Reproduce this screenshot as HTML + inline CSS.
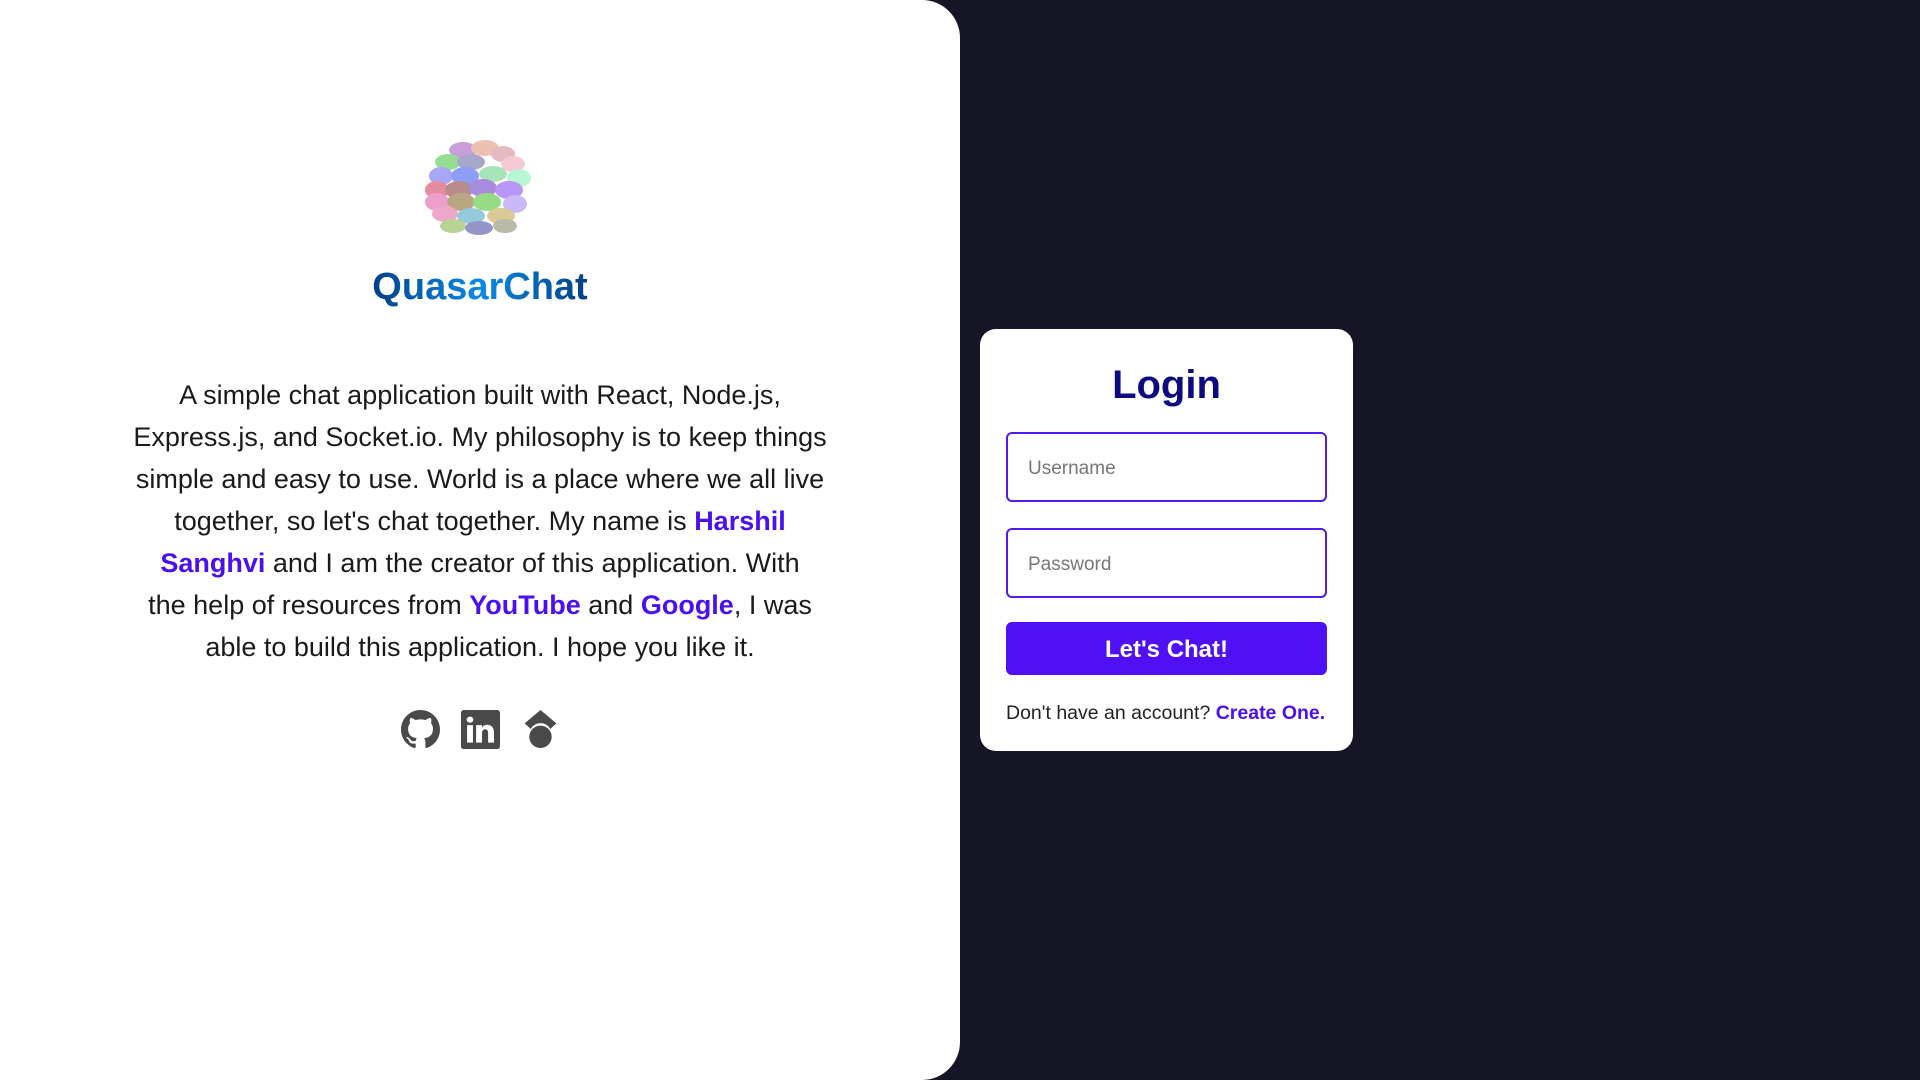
<!DOCTYPE html>
<html><head><meta charset="utf-8"><style>
*{margin:0;padding:0;box-sizing:border-box}
body{width:1920px;height:1080px;background:#151526;font-family:"Liberation Sans",sans-serif;position:relative;overflow:hidden}
.left{position:absolute;left:0;top:0;width:960px;height:1080px;background:#fff;border-radius:0 38px 38px 0}
.logo{position:absolute;left:423px;top:138px;width:114px;height:100px}
.title{position:absolute;left:0;width:960px;top:266px;text-align:center}
.title span{display:inline-block;font-size:38px;font-weight:bold;background:linear-gradient(90deg,#003f88,#0a8be8 50%,#003f88);-webkit-background-clip:text;background-clip:text;color:transparent}
.para{position:absolute;left:80px;width:800px;top:374px;text-align:center;font-size:27px;line-height:42px;color:#1a1a1a;white-space:nowrap}
.para b{color:#4a10f0}
.icons{position:absolute;top:710px;left:0;width:960px;display:flex;justify-content:center;gap:21px}
.icons svg{width:39px;height:39px}
.card{position:absolute;left:980px;top:329px;width:373px;height:422px;background:#fff;border-radius:16px}
.lt{position:absolute;left:0;width:373px;top:34px;text-align:center;font-size:40px;font-weight:bold;color:#0d0a80}
.inp{position:absolute;left:26px;width:321px;height:70px;border:2px solid #4f1af0;border-radius:6px;font-size:19px;color:#777;padding-left:20px;line-height:70px}
.btn{position:absolute;left:26px;top:293px;width:321px;height:53px;background:#5010f5;border-radius:6px;color:#fff;font-weight:bold;font-size:24px;text-align:center;line-height:56px}
.ft{position:absolute;left:26px;top:373px;font-size:19.5px;color:#222}
.ft b{color:#4a10f0}
</style></head><body>
<div class="left">
<svg class="logo" viewBox="0 0 114 100">
<g opacity="0.55">
<ellipse cx="40" cy="12" rx="14" ry="8" fill="#a050c0"/><ellipse cx="62" cy="10" rx="14" ry="8" fill="#e09070"/><ellipse cx="80" cy="16" rx="12" ry="8" fill="#d08090"/>
<ellipse cx="25" cy="24" rx="13" ry="8" fill="#40c040"/><ellipse cx="48" cy="24" rx="14" ry="8" fill="#6060a0"/><ellipse cx="90" cy="26" rx="12" ry="8" fill="#f0a0b0"/>
<ellipse cx="18" cy="38" rx="12" ry="9" fill="#6060f0"/><ellipse cx="42" cy="38" rx="14" ry="9" fill="#3050f0"/><ellipse cx="70" cy="36" rx="14" ry="8" fill="#60d080"/><ellipse cx="96" cy="40" rx="12" ry="9" fill="#80f0b0"/>
<ellipse cx="14" cy="52" rx="12" ry="9" fill="#d03050"/><ellipse cx="36" cy="52" rx="14" ry="9" fill="#803030"/><ellipse cx="60" cy="50" rx="14" ry="9" fill="#6030c0"/><ellipse cx="86" cy="52" rx="14" ry="9" fill="#8040f0"/>
<ellipse cx="14" cy="64" rx="12" ry="9" fill="#e050a0"/><ellipse cx="38" cy="64" rx="14" ry="9" fill="#806020"/><ellipse cx="64" cy="64" rx="14" ry="9" fill="#40c020"/><ellipse cx="92" cy="66" rx="12" ry="9" fill="#a080f0"/>
<ellipse cx="22" cy="76" rx="13" ry="8" fill="#e060a0"/><ellipse cx="48" cy="78" rx="14" ry="8" fill="#40a0c0"/><ellipse cx="78" cy="78" rx="14" ry="8" fill="#c0a040"/>
<ellipse cx="30" cy="88" rx="13" ry="7" fill="#80b040"/><ellipse cx="56" cy="90" rx="14" ry="7" fill="#4040a0"/><ellipse cx="82" cy="88" rx="12" ry="7" fill="#808060"/>
</g></svg>
<div class="title"><span>QuasarChat</span></div>
<div class="para">A simple chat application built with React, Node.js,<br>Express.js, and Socket.io. My philosophy is to keep things<br>simple and easy to use. World is a place where we all live<br>together, so let's chat together. My name is <b>Harshil</b><br><b>Sanghvi</b> and I am the creator of this application. With<br>the help of resources from <b>YouTube</b> and <b>Google</b>, I was<br>able to build this application. I hope you like it.</div>
<div class="icons">
<svg viewBox="0 0 16 16"><path fill="#4a4a4a" d="M8 0C3.58 0 0 3.58 0 8c0 3.54 2.29 6.53 5.47 7.59.4.07.55-.17.55-.38 0-.19-.01-.82-.01-1.49-2.01.37-2.53-.49-2.690-.94-.09-.23-.48-.94-.82-1.130-.28-.15-.68-.52-.01-.53.63-.01 1.08.58 1.23.82.72 1.21 1.87.87 2.33.66.07-.52.28-.87.51-1.07-1.78-.2-3.64-.89-3.64-3.95 0-.87.31-1.59.82-2.15-.08-.2-.36-1.02.08-2.12 0 0 .67-.21 2.2.82.64-.18 1.32-.27 2-.27.68 0 1.36.09 2 .27 1.53-1.04 2.2-.82 2.2-.82.44 1.1.16 1.92.08 2.12.51.56.82 1.27.82 2.15 0 3.07-1.87 3.75-3.65 3.95.29.25.54.73.54 1.48 0 1.07-.01 1.93-.01 2.2 0 .21.15.46.55.38A8.013 8.013 0 0016 8c0-4.42-3.58-8-8-8z"/></svg>
<svg viewBox="0 0 16 16"><path fill="#4a4a4a" d="M0 1.15C0 .52.52 0 1.15 0h13.7C15.48 0 16 .52 16 1.15v13.7c0 .63-.52 1.15-1.15 1.15H1.15C.52 16 0 15.48 0 14.85zM4.9 13.4V6.2H2.5v7.2zM3.7 5.2c.84 0 1.36-.55 1.36-1.24C5.05 3.25 4.54 2.7 3.72 2.7S2.35 3.25 2.35 3.96c0 .7.52 1.24 1.33 1.24zm4.9 8.2V9.38c0-.21.02-.43.08-.58.17-.43.57-.88 1.23-.88.87 0 1.22.66 1.22 1.63v3.85h2.4V9.27c0-2.2-1.18-3.23-2.76-3.23-1.27 0-1.84.7-2.16 1.2V6.2H6.2c.03.68 0 7.2 0 7.2z"/></svg>
<svg viewBox="0 0 16 16"><path fill="#4a4a4a" d="M8 0L1.5 5.5 4 7.8A4.5 4.5 0 0 1 12 7.8l2.5-2.3z"/><circle cx="8" cy="11" r="4.6" fill="#4a4a4a"/></svg>
</div>
</div>
<div class="card">
<div class="lt">Login</div>
<div class="inp" style="top:103px">Username</div>
<div class="inp" style="top:199px">Password</div>
<div class="btn">Let's Chat!</div>
<div class="ft">Don't have an account? <b>Create One.</b></div>
</div>
</body></html>
